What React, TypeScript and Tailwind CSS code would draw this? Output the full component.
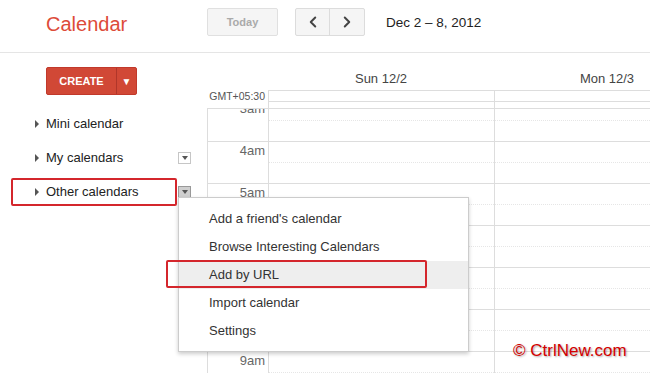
import { ChevronLeft, ChevronRight } from "lucide-react";

const hours = ["3am", "4am", "5am", "6am", "7am", "8am", "9am"];
const days = ["Sun 12/2", "Mon 12/3"];

const menuItems = [
  "Add a friend's calendar",
  "Browse Interesting Calendars",
  "Add by URL",
  "Import calendar",
  "Settings",
];

const Triangle = () => (
  <span className="mr-[7px] inline-block h-0 w-0 border-y-[4px] border-l-[4px] border-y-transparent border-l-[#555]" />
);

const SmallDrop = ({ active }: { active?: boolean }) => (
  <span
    className={`flex h-[12px] w-[13px] items-center justify-center border ${
      active ? "border-[#999] bg-[#cfcfcf]" : "border-[#c6c6c6] bg-white"
    }`}
  >
    <span className="h-0 w-0 border-x-[3.5px] border-t-[4px] border-x-transparent border-t-[#555]" />
  </span>
);

export default function App() {
  return (
    <div className="relative h-[373px] w-[650px] overflow-hidden bg-white font-['Liberation_Sans',Arial,sans-serif] text-[#222]">
      {/* top bar */}
      <header className="flex h-[53px] items-start border-b border-[#e5e5e5]">
        <div className="w-[207px] pl-[46px] pt-[11px] text-[20px] leading-[26px] text-[#dd4b39]">
          Calendar
        </div>
        <div className="mt-[8px] flex h-[28px] w-[71px] items-center justify-center rounded-[2px] border border-[#e0e0e0] bg-[#f5f5f5] text-[11px] font-bold text-[#aaa]">
          Today
        </div>
        <div className="ml-[17px] mt-[8px] flex h-[28px] rounded-[2px] border border-[#dcdcdc] bg-[#f5f5f5]">
          <div className="flex w-[34px] items-center justify-center border-r border-[#dcdcdc]">
            <ChevronLeft className="h-[18px] w-[18px] text-[#444]" strokeWidth={2.6} />
          </div>
          <div className="flex w-[34px] items-center justify-center">
            <ChevronRight className="h-[18px] w-[18px] text-[#444]" strokeWidth={2.6} />
          </div>
        </div>
        <div className="ml-[21px] pt-[15px] text-[13.5px] leading-[16px] text-[#222]">
          Dec 2 – 8, 2012
        </div>
      </header>

      <div className="flex">
        {/* sidebar */}
        <aside className="w-[207px] pt-[14px]">
          <div className="ml-[46px] flex h-[28px] w-[91px] rounded-[2px] border border-[#c1392b] bg-[#d14836] text-white">
            <div className="flex w-[70px] items-center justify-center border-r border-[#b0362a] text-[11px] font-bold">
              CREATE
            </div>
            <div className="flex flex-1 items-center justify-center text-[10px]">▼</div>
          </div>
          <div className="mt-[12px]">
            <div className="flex h-[34px] items-center pl-[35px] text-[13px]">
              <Triangle />
              Mini calendar
            </div>
            <div className="flex h-[34px] items-center pl-[35px] pr-[16px] text-[13px]">
              <Triangle />
              <span className="flex-1">My calendars</span>
              <SmallDrop />
            </div>
            <div className="flex h-[34px] items-center pl-[35px] pr-[16px] text-[13px]">
              <Triangle />
              <span className="flex-1">Other calendars</span>
              <SmallDrop active />
            </div>
          </div>
        </aside>

        {/* week grid */}
        <main className="flex-1 overflow-hidden">
          <div className="flex h-[37px]">
            <div className="w-[61px] shrink-0" />
            {days.map((d) => (
              <div
                key={d}
                className="flex w-[226px] shrink-0 items-end justify-center pb-[4px] text-[13px] leading-[15px] text-[#444]"
              >
                {d}
              </div>
            ))}
          </div>
          <div className="flex h-[12px]">
            <div className="w-[61px] shrink-0 pr-[3px] text-right text-[10.5px] leading-[12px] text-[#555]">
              GMT+05:30
            </div>
            {days.map((d) => (
              <div key={d} className="h-[12px] w-[226px] shrink-0 border-y border-l border-[#ddd]" />
            ))}
          </div>
          <div className="flex h-[6px]">
            <div className="w-[61px] shrink-0" />
            {days.map((d) => (
              <div key={d} className="w-[226px] shrink-0 border-l border-[#ddd]" />
            ))}
          </div>
          <div className="h-[265px] overflow-hidden border-t border-[#ddd]">
            <div className="-mt-[10px] flex">
              <div className="w-[61px] shrink-0 border-l border-[#ddd]">
                {hours.map((h) => (
                  <div
                    key={h}
                    className="h-[42px] border-t border-[#ddd] pr-[3px] pt-[1px] text-right text-[13px] leading-[15px] text-[#666]"
                  >
                    {h}
                  </div>
                ))}
              </div>
              {days.map((d) => (
                <div key={d} className="w-[226px] shrink-0 border-l border-[#ddd]">
                  {hours.map((h) => (
                    <div key={h} className="h-[42px] border-t border-[#ddd]">
                      <div className="h-[21px] border-b border-dotted border-[#e6e6e6]" />
                    </div>
                  ))}
                </div>
              ))}
            </div>
          </div>
        </main>
      </div>

      {/* dropdown menu */}
      <div className="absolute left-[178px] top-[197px] w-[291px] border border-[#ccc] bg-white pb-[6px] pt-[7px] shadow-[0_2px_4px_rgba(0,0,0,0.2)]">
        {menuItems.map((item) => (
          <div
            key={item}
            className={`flex h-[28px] items-center pl-[30px] text-[13px] text-[#333] ${
              item === "Add by URL" ? "bg-[#eeeeee]" : ""
            }`}
          >
            {item}
          </div>
        ))}
      </div>

      {/* highlight boxes */}
      <div className="absolute left-[11px] top-[178px] h-[28px] w-[166px] rounded-[2px] border-2 border-[#d4262c]" />
      <div className="absolute left-[166px] top-[260px] h-[28px] w-[261px] rounded-[2px] border-2 border-[#d4262c]" />

      <div className="absolute left-[513px] top-[341px] text-[17px] leading-[20px] text-[#d40000] [text-shadow:1px_1px_2px_rgba(0,0,0,0.35)]">
        © CtrlNew.com
      </div>
    </div>
  );
}
